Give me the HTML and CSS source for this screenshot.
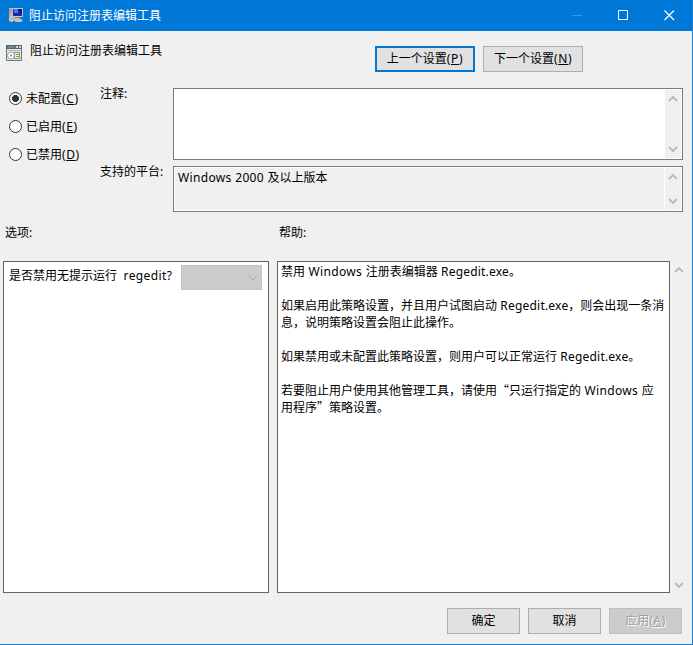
FILE: index.html
```html
<!DOCTYPE html>
<html lang="zh-CN">
<head>
<meta charset="utf-8">
<title>阻止访问注册表编辑工具</title>
<link rel="stylesheet" href="styles.css">
</head>
<body>
<div class="window">
  <header class="titlebar">
    <svg class="app-icon" width="17" height="16" viewBox="0 0 17 16">
      <path d="M1 1h5v12H1z" fill="#b9b4b0"/><path d="M1.500 3h3M1.500 5h3" stroke="#8b858e"/>
      <path d="M4 1h11v9H4z" fill="#c4c3d4"/><path d="M5 2h9v7H5z" fill="#1729a5"/><path d="M6 2h4v4H6z" fill="#4f73df"/><path d="M10 2h4v5z" fill="#0a126c"/>
      <path d="M8 10h4v2H8z" fill="#898896"/><path d="M3 12l2-2 8 2 2 2-2 1H8z" fill="#c4c1bd"/><path d="M1 11l3-2 3 3-3 3-3-1z" fill="#d5cdc0"/><path d="M2 13l3-2 2 2" fill="none" stroke="#9a9597"/>
    </svg>
    <h1>阻止访问注册表编辑工具</h1>
    <div class="controls">
      <svg width="46" height="30" viewBox="0 0 46 30"><path d="M18 15.500h10" stroke="#3b95e4"/></svg>
      <svg width="46" height="30" viewBox="0 0 46 30"><path d="M18.500 10.500h9v9h-9z" fill="none" stroke="#fff"/></svg>
      <svg width="46" height="30" viewBox="0 0 46 30"><path d="M18.500 10.500l9.500 9.500M28 10.500l-9.500 9.500" fill="none" stroke="#fff" stroke-width="1.200"/></svg>
    </div>
  </header>

  <section class="setting">
    <svg class="setting-icon" width="16" height="16" viewBox="0 0 16 16">
      <path d="M.5.5h15v15H.5z" fill="#e6e8df" stroke="#68777d"/><path d="M0 0h16v4H0z" fill="#526b78"/><path d="M2 2h7" stroke="#8ba2a9"/><path d="M10 1h2v2h-2zM13 1h2v2h-2z" fill="#d8d8c8"/>
      <path d="M2 5.500h12" stroke="#b0b9b6"/><circle cx="5" cy="10.500" r="3.500" fill="#fafaf6" stroke="#a4aaa5"/><circle cx="5" cy="10.500" r="1" fill="#748188"/>
      <path d="M8.500 7.500h5v6h-5z" fill="#f7f2d8" stroke="#958e73"/><path d="M10 9.500h3M10 11.500h3" stroke="#8a8974"/>
    </svg>
    <h2>阻止访问注册表编辑工具</h2>
    <div class="nav">
      <button class="btn focused">上一个设置<span class="key">(<u>P</u>)</span></button>
      <button class="btn">下一个设置<span class="key">(<u>N</u>)</span></button>
    </div>
  </section>

  <section class="state">
    <div class="radios">
      <div class="radio"><i class="dot on"></i><span>未配置<span class="key">(<u>C</u>)</span></span></div>
      <div class="radio"><i class="dot"></i><span>已启用<span class="key">(<u>E</u>)</span></span></div>
      <div class="radio"><i class="dot"></i><span>已禁用<span class="key">(<u>D</u>)</span></span></div>
    </div>
    <div class="fields">
      <div class="label">注释:</div>
      <div class="box comment">
        <div class="value"></div>
        <div class="scroll">
          <svg width="10" height="8" viewBox="0 0 10 8"><path d="M1 6l4-4 4 4"/></svg>
          <svg width="10" height="8" viewBox="0 0 10 8"><path d="M1 2l4 4 4-4"/></svg>
        </div>
      </div>
      <div class="label">支持的平台:</div>
      <div class="box platform">
        <div class="value"><span class="win">Windows 2000 </span>及以上版本</div>
        <div class="scroll">
          <svg width="10" height="8" viewBox="0 0 10 8"><path d="M1 6l4-4 4 4"/></svg>
          <svg width="10" height="8" viewBox="0 0 10 8"><path d="M1 2l4 4 4-4"/></svg>
        </div>
      </div>
    </div>
  </section>

  <section class="headings"><div>选项:</div><div>帮助:</div></section>

  <section class="panes">
    <div class="options">
      <span>是否禁用无提示运行<span class="question"> regedit?</span></span>
      <div class="combo"><svg width="10" height="8" viewBox="0 0 10 8"><path d="M1 2l4 4 4-4"/></svg></div>
    </div>
    <div class="help">
      <p>禁用<span class="win"> Windows </span>注册表编辑器<span class="exe"> Regedit.exe</span>。</p>
      <p>如果启用此策略设置，并且用户试图启动<span class="exe"> Regedit.exe</span>，则会出现一条消<br>息，说明策略设置会阻止此操作。</p>
      <p>如果禁用或未配置此策略设置，则用户可以正常运行<span class="exe"> Regedit.exe</span>。</p>
      <p>若要阻止用户使用其他管理工具，请使用<span class="cjk">“</span>只运行指定的<span class="win"> Windows </span>应<br>用程序<span class="cjk">”</span>策略设置。</p>
    </div>
    <div class="scroll outer">
      <svg width="10" height="8" viewBox="0 0 10 8"><path d="M1 6l4-4 4 4"/></svg>
      <svg width="10" height="8" viewBox="0 0 10 8"><path d="M1 2l4 4 4-4"/></svg>
    </div>
  </section>

  <footer class="footer">
    <button class="btn">确定</button>
    <button class="btn">取消</button>
    <button class="btn disabled">应用<span class="key">(<u>A</u>)</span></button>
  </footer>
</div>
</body>
</html>
```
FILE: styles.css
```css
* { box-sizing: border-box; }
body { margin: 0; font: 12px/17px "Noto Sans", "Noto Sans CJK SC", sans-serif; color: #000; }
h1, h2, p { margin: 0; font-size: 12px; font-weight: 400; }
svg { display: block; flex: none; }
u { text-underline-offset: 1px; text-decoration-thickness: 1px; text-decoration-skip-ink: none; }

.window { width: 693px; height: 645px; overflow: hidden; display: flex; flex-direction: column; background: #f0f0f0; border: solid #1a7fd0; border-width: 0 1px 1px 0; white-space: nowrap; }

.titlebar { height: 31px; margin-right: -1px; flex: none; display: flex; align-items: flex-start; background: #0078d7; color: #fff; }
.app-icon { margin: 7px 4px 0 8px; }
.titlebar h1 { padding-top: 7px; }
.controls { display: flex; margin-left: auto; padding-right: 1px; }

.setting { height: 57px; flex: none; display: flex; align-items: flex-start; padding: 0 109px 0 6px; }
.setting-icon { margin-top: 14px; }
.setting h2 { margin: 11px 0 0 8px; }
.nav { display: flex; gap: 8px; margin: 15px 0 0 auto; }
.btn { width: 100px; height: 26px; padding: 0 0 1px; border: 1px solid #adadad; background: #e1e1e1; color: #000; font: inherit; }
.btn.focused { border: 2px solid #0078d7; }

.key { letter-spacing: .6px; }
.win { letter-spacing: .35px; }
.exe { letter-spacing: .2px; }
.question { margin-left: 3px; letter-spacing: .4px; }

.state { display: flex; height: 124px; flex: none; }
.radios { width: 100px; display: flex; flex-direction: column; gap: 11px; padding: 2px 0 0 9px; }
.radio { display: flex; align-items: center; gap: 4px; height: 17px; }
.dot { width: 13px; height: 13px; border: 1px solid #333; border-radius: 50%; background: #fff; flex: none; }
.dot.on { background: radial-gradient(circle, #333 3.2px, #fff 3.8px); }
.fields { display: grid; grid-template-columns: 73px 510px; grid-template-rows: 72px 46px; row-gap: 6px; }
.label { margin-top: -3px; }
.box { display: flex; border: 1px solid #7a7a7a; background: #fff; padding: 1px; }
.box .value { flex: 1; padding: 1px 3px; }
.box.platform .value { background: #f0f0f0; }
.scroll { width: 17px; flex: none; display: flex; flex-direction: column; align-items: center; justify-content: space-between; padding: 5px 0; background: #f0f0f0; }
.scroll svg path { fill: none; stroke: #b9b9b9; stroke-width: 1.8; }
.box .scroll { width: 16px; }
.box.platform .scroll { width: 17px; border-left: 1px solid #fff; }

.headings { display: grid; grid-template-columns: 274px 1fr; height: 49px; flex: none; padding: 12px 0 0 5px; }

.panes { display: flex; height: 332px; flex: none; padding-left: 3px; }
.options { width: 266px; margin-right: 8px; border: 1px solid #646464; background: #fff; display: flex; align-items: flex-start; justify-content: space-between; padding: 3px 6px 0 5px; }
.options > span { padding-top: 2px; }
.combo { width: 81px; height: 25px; background: #ccc; border: 1px solid #c4c4c4; display: flex; align-items: center; justify-content: flex-end; padding-right: 3px; }
.combo path { fill: none; stroke: #aaa; }
.help { width: 393px; border: 1px solid #646464; background: #fff; padding: 1px 3px; }
.help p { margin-bottom: 17px; }
.cjk { font-family: "Noto Sans CJK SC", sans-serif; line-height: 0; }
.scroll.outer { padding: 5px 0 4px; }

.footer { display: flex; gap: 8px; justify-content: flex-end; padding: 15px 10px 0 0; }
.footer .btn { width: 73px; }
.btn.disabled { background: #ccc; border-color: #bfbfbf; color: #a0a0a0; text-shadow: 1px 1px 0 #fff; }
```
